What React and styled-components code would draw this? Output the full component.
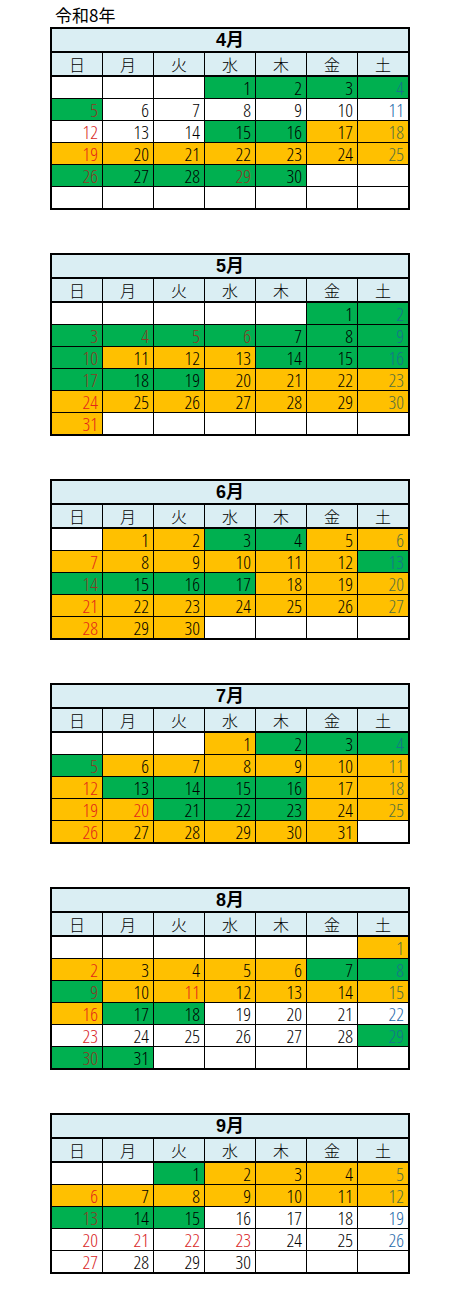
import React from 'react';
import styled, { createGlobalStyle } from 'styled-components';

const GlobalStyle = createGlobalStyle`
  body {
    margin: 0;
    background: #fff;
    font-family: "Noto Sans CJK JP", "Liberation Sans", sans-serif;
  }
`;

const WEEK = ['日', '月', '火', '水', '木', '金', '土'];

// one letter per day: g = green, o = orange, w = white
const months = [
  { name: '4月', first: 3, rows: 6, holidays: [29],
    colors: 'gggg' + 'gwwwwww' + 'wwwggoo' + 'ooooooo' + 'ggggg' },
  { name: '5月', first: 5, rows: 6, holidays: [3, 4, 5, 6],
    colors: 'gg' + 'ggggggg' + 'goooggg' + 'gggoooo' + 'ooooooo' + 'o' },
  { name: '6月', first: 1, rows: 5, holidays: [],
    colors: 'ooggoo' + 'oooooog' + 'ggggooo' + 'ooooooo' + 'ooo' },
  { name: '7月', first: 3, rows: 5, holidays: [20],
    colors: 'oggg' + 'goooooo' + 'oggggoo' + 'oogggoo' + 'oooooo' },
  { name: '8月', first: 6, rows: 6, holidays: [11],
    colors: 'o' + 'ooooogg' + 'goooooo' + 'oggwwww' + 'wwwwwwg' + 'gg' },
  { name: '9月', first: 2, rows: 5, holidays: [21, 22, 23],
    colors: 'goooo' + 'ooooooo' + 'gggwwww' + 'wwwwwww' + 'wwww' },
];

const BG = { g: '#00b050', o: '#ffc000', w: '#ffffff' };

// text tones as they come out on each fill
const TEXT = {
  red: { g: '#8a3a26', o: '#e3261a', w: '#d81e1e' },
  blue: { g: '#17748a', o: '#56703e', w: '#1f6aaa' },
  black: { g: '#000', o: '#000', w: '#000' },
};

const Page = styled.div`
  padding: 5px 0 40px 0;
`;

const YearTitle = styled.div`
  margin-left: 55px;
  font-size: 17px;
  line-height: 20px;
  height: 22px;
  color: #000;
`;

const Calendar = styled.div`
  width: 356px;
  margin-left: 50px;
  margin-bottom: 43px;
  border: 2px solid #000;
`;

const MonthTitle = styled.div`
  height: 22px;
  line-height: 23px;
  text-align: center;
  background: #daeef3;
  border-bottom: 2px solid #000;
  font-family: "Liberation Sans", "Noto Sans CJK JP", sans-serif;
  font-weight: bold;
  font-size: 18px;
`;

const Grid = styled.div`
  display: grid;
  grid-template-columns: repeat(7, 50px);
  grid-auto-rows: ${(p) => p.$rowH}px;
  gap: 1px;
  background: #000;
`;

const HeadGrid = styled(Grid)`
  border-bottom: 2px solid #000;
`;

const HeadCell = styled.div`
  background: #daeef3;
  text-align: center;
  font-size: 16px;
  line-height: 22px;
  font-weight: 300;
`;

const DayCell = styled.div`
  box-sizing: border-box;
  background: ${(p) => BG[p.$bg]};
  color: ${(p) => p.$color};
  text-align: right;
  padding: 1px 4px 0 0;
  font-family: "Open Sans", "Liberation Sans", sans-serif;
  font-stretch: 75%;
  font-weight: 300;
  font-size: 19px;
  line-height: 20px;
`;

function MonthCalendar({ month }) {
  const cells = [];
  const days = month.colors.length;
  for (let i = 0; i < month.rows * 7; i++) {
    const d = i - month.first + 1;
    if (d < 1 || d > days) {
      cells.push(<DayCell key={i} $bg="w" $color="#000" />);
      continue;
    }
    const bg = month.colors[d - 1];
    const dow = i % 7;
    let tone = 'black';
    if (dow === 0 || month.holidays.includes(d)) tone = 'red';
    else if (dow === 6) tone = 'blue';
    cells.push(
      <DayCell key={i} $bg={bg} $color={TEXT[tone][bg]}>
        {d}
      </DayCell>
    );
  }

  return (
    <Calendar>
      <MonthTitle>{month.name}</MonthTitle>
      <HeadGrid $rowH={22}>
        {WEEK.map((w) => (
          <HeadCell key={w}>{w}</HeadCell>
        ))}
      </HeadGrid>
      <Grid $rowH={21}>{cells}</Grid>
    </Calendar>
  );
}

const App = () => {
  return (
    <>
      <GlobalStyle />
      <Page>
        <YearTitle>令和8年</YearTitle>
        {months.map((m) => (
          <MonthCalendar key={m.name} month={m} />
        ))}
      </Page>
    </>
  );
};

export default App;
